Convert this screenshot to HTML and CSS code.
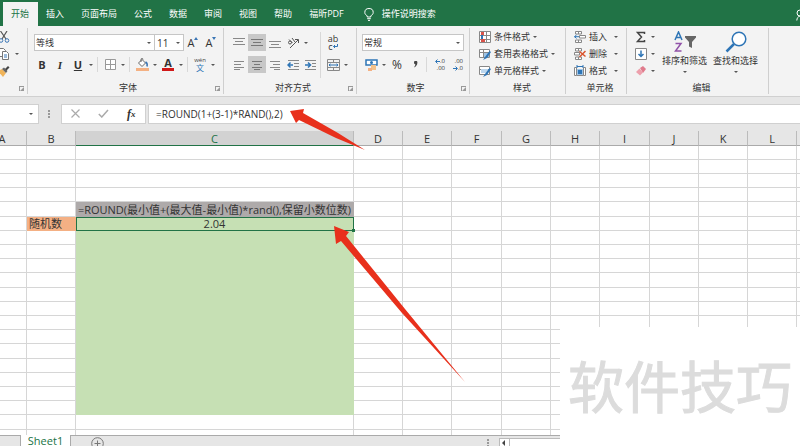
FILE: index.html
```
<!DOCTYPE html>
<html lang="zh-CN">
<head>
    <meta charset="UTF-8">
    <meta name="viewport" content="width=device-width, initial-scale=1.0">
    <title>Sheet1</title>
    <link rel="stylesheet" href="styles.css">
</head>
<body>
    <div class="menu">
        <button class="tab active">开始</button>
        <button class="tab">插入</button>
        <button class="tab">页面布局</button>
        <button class="tab">公式</button>
        <button class="tab">数据</button>
        <button class="tab">审阅</button>
        <button class="tab">视图</button>
        <button class="tab">帮助</button>
        <button class="tab">福昕PDF</button>
        <button class="tell">
            <svg width="10" height="13" viewBox="0 0 10 13" fill="none" stroke="#fff"><path d="M3.2 9V7.8C1.800 7 .8 6 .8 4.500a4.200 4 0 0 1 8.400 0C9.200 6 8.200 7 6.800 7.800V9zM3.200 10.700h3.600M4 12.400h2"/></svg>
            操作说明搜索
        </button>
        <svg class="user" width="4" height="12" viewBox="0 0 4 12" fill="none" stroke="#fff"><path d="M4 1a3 3 0 0 0 0 6M4 7C2 7.500 1 9 .8 11.500"/></svg>
    </div>

    <div class="ribbon">
        <div class="group clip">
            <div class="list">
                <button class="tool"><svg width="12" height="12" viewBox="0 0 12 12" fill="none"><path d="M2.500 0L8 8M9 0L4 8" stroke="#555" stroke-width="1.200"/><circle cx="3" cy="9.500" r="1.800" stroke="#3b76b5"/><circle cx="9" cy="9.500" r="1.800" stroke="#3b76b5"/></svg></button>
                <div class="row">
                    <button class="tool"><svg width="12" height="12" viewBox="0 0 12 12" fill="#fff" stroke="#777"><path d="M.5.5h5l2 2v6h-7z"/><path d="M4.500 3.500h4l2 2v6h-6z"/><path d="M6 7h3M6 9h3" stroke="#3b76b5"/></svg></button>
                    <button class="drop"></button>
                </div>
                <button class="tool"><svg width="12" height="12" viewBox="0 0 12 12"><path d="M0 6l4-2 4 4-3 4z" fill="#f0b45a"/><path d="M4 4l2-1.500L9.500 6 8 8z" fill="#666"/><path d="M7 4l3-3 1.500 1.500-3 3z" fill="#444"/></svg></button>
            </div>
            <div class="label"><i class="corner"></i></div>
        </div>

        <div class="group font">
            <div class="rows">
                <div class="row">
                    <span class="combo name"><select aria-label="字体"><option>等线</option></select></span>
                    <span class="combo size"><select aria-label="字号"><option>11</option></select></span>
                    <button class="tool"><span class="grow">A</span><svg class="mark" width="4" height="3" viewBox="0 0 4 3"><path d="M0 3l2-3 2 3z" fill="#3b76b5"/></svg></button>
                    <button class="tool"><span class="grow">A</span><svg class="mark" width="4" height="3" viewBox="0 0 4 3"><path d="M0 0h4L2 3z" fill="#3b76b5"/></svg></button>
                </div>
                <div class="row">
                    <button class="tool"><b>B</b></button>
                    <button class="tool"><b><em>I</em></b></button>
                    <button class="tool"><b><u>U</u></b></button>
                    <button class="drop"></button>
                    <i class="line"></i>
                    <button class="tool"><svg width="11" height="11" viewBox="0 0 11 11" fill="#fff" stroke="#999"><path d="M.5.5h10v10H.5zM5.500.5v10M.5 5.500h10"/></svg></button>
                    <button class="drop"></button>
                    <i class="line"></i>
                    <button class="tool"><svg width="13" height="13" viewBox="0 0 13 13"><path d="M2.500 5L6 1.500 9.500 5 6 8.500z" fill="#fff" stroke="#666"/><path d="M5 4V1.500a1 1 0 0 1 2 0" fill="none" stroke="#666"/><path d="M9.500 4c2 1 2 2.500 1.500 4.500" fill="none" stroke="#3b76b5" stroke-width="1.500"/><path d="M0 10h13v3H0z" fill="#f4b183"/></svg></button>
                    <button class="drop"></button>
                    <button class="tool"><span class="color">A</span></button>
                    <button class="drop"></button>
                    <i class="line"></i>
                    <button class="tool pinyin"><small>wén</small><span>文</span></button>
                    <button class="drop"></button>
                </div>
            </div>
            <div class="label">字体<i class="corner"></i></div>
        </div>

        <div class="group align">
            <div class="split">
                <div class="rows">
                    <div class="row">
                        <button class="tool"><svg width="12" height="12" viewBox="0 0 12 12" stroke="#888"><path d="M0 1.500h12M2 4.500h8M0 7.500h12"/></svg></button>
                        <button class="tool on"><svg width="12" height="12" viewBox="0 0 12 12" stroke="#777"><path d="M0 2.500h12M2 5.500h8M0 8.500h12"/></svg></button>
                        <button class="tool"><svg width="12" height="12" viewBox="0 0 12 12" stroke="#888"><path d="M0 4.500h12M2 7.500h8M0 10.500h12"/></svg></button>
                        <button class="tool"><svg width="12" height="12" viewBox="0 0 12 12" fill="none" stroke="#555"><path d="M3 11l8-8M8 2.500h3.500V6"/><circle cx="3" cy="5.500" r="1.500"/><path d="M2 2.500L5.500 6M5 1l3 4"/></svg></button>
                        <button class="drop"></button>
                    </div>
                    <div class="row">
                        <button class="tool"><svg width="10" height="10" viewBox="0 0 10 10" stroke="#888"><path d="M0 1.500h10M0 4.500h7M0 7.500h10M0 9.500h6"/></svg></button>
                        <button class="tool on"><svg width="12" height="10" viewBox="0 0 12 10" stroke="#777"><path d="M1 1.500h10M3 4.500h6M1 7.500h10M3 9.500h6"/></svg></button>
                        <button class="tool"><svg width="10" height="10" viewBox="0 0 10 10" stroke="#888"><path d="M0 1.500h10M3 4.500h7M0 7.500h10M4 9.500h6"/></svg></button>
                        <button class="tool"><svg width="12" height="12" viewBox="0 0 12 12" fill="none" stroke="#888"><path d="M1 1.500h11M7 4.500h5M7 7.500h5M1 10.500h11"/><path d="M6 6H1M3.500 3.500L1 6l2.500 2.500" stroke="#2e75b6" stroke-width="1.500"/></svg></button>
                        <button class="tool"><svg width="12" height="12" viewBox="0 0 12 12" fill="none" stroke="#888"><path d="M0 1.500h11M7 4.500h4M7 7.500h4M0 10.500h11"/><path d="M0 6h5M3 3.500L5.500 6 3 8.500" stroke="#2e75b6" stroke-width="1.500"/></svg></button>
                    </div>
                </div>
                <i class="line"></i>
                <div class="rows">
                    <div class="row">
                        <button class="tool wrap"><span>ab</span><span>c<svg width="5" height="5" viewBox="0 0 5 5" fill="none" stroke="#2e75b6"><path d="M4.500 0v2.500H.5M2 1L.5 2.500 2 4"/></svg></span></button>
                    </div>
                    <div class="row">
                        <button class="tool"><svg width="13" height="12" viewBox="0 0 13 12" fill="none" stroke="#888"><path d="M.5.5h12v11H.5zM.5 3.500h12M.5 8.500h12M6.500.5v3M6.500 8.500v3"/><path d="M2 6h9M3.500 4.800L2 6l1.500 1.200M9.500 4.800L11 6 9.500 7.200" stroke="#2e75b6"/></svg></button>
                        <button class="drop"></button>
                    </div>
                </div>
            </div>
            <div class="label">对齐方式<i class="corner"></i></div>
        </div>

        <div class="group number">
            <div class="rows">
                <div class="row">
                    <span class="combo format"><select aria-label="数字格式"><option>常规</option></select></span>
                </div>
                <div class="row">
                    <button class="tool"><svg width="13" height="13" viewBox="0 0 13 13"><path d="M1 2h11v5H1z" fill="#fff" stroke="#2e75b6" stroke-width="1.500"/><circle cx="6.500" cy="4.500" r="1.500" fill="#2e75b6"/><path d="M6 7h5v5H6z" fill="#f4c28a"/><path d="M3 10h4v3H3z" fill="#f4b183"/></svg></button>
                    <button class="drop"></button>
                    <button class="tool percent">%</button>
                    <button class="tool"><svg width="5" height="8" viewBox="0 0 5 8"><path d="M1 1.500a1.700 1.700 0 0 1 3.400 0C4.400 4 3 5.500 1 6.500 2 5.200 2.400 4.300 2.300 3.300 1.500 3.200 1 2.500 1 1.500z" fill="#444"/></svg></button>
                    <i class="line"></i>
                    <button class="tool dec"><span><svg width="5" height="5" viewBox="0 0 5 5" fill="none" stroke="#2e75b6"><path d="M5 2.500H1M2.500.5l-2 2 2 2"/></svg>.0</span><span>.00</span></button>
                    <button class="tool dec"><span>.00</span><span><svg width="5" height="5" viewBox="0 0 5 5" fill="none" stroke="#2e75b6"><path d="M0 2.500h4M2.500.5l2 2-2 2"/></svg>.0</span></button>
                </div>
            </div>
            <div class="label">数字<i class="corner"></i></div>
        </div>

        <div class="group style">
            <div class="list">
                <button class="item"><svg width="12" height="12" viewBox="0 0 12 12"><path d="M.5.5h11v11H.5zM.5 4.500h11M.5 8.500h11M7.500.5v11" fill="#fff" stroke="#888"/><path d="M2 1h3v3H2zM2 8h4v3H2z" fill="#d9534a"/><path d="M2 4h2v4H2z" fill="#2e75b6"/></svg>条件格式<i class="caret"></i></button>
                <button class="item"><svg width="12" height="12" viewBox="0 0 12 12"><path d="M.5 1.500h10v8H.5zM.5 4.500h10M4.500 1.500v8" fill="#fff" stroke="#888"/><path d="M5 5h5v4H5z" fill="#9dc3e6"/><path d="M4 12l2-3 4.500-6L12 4 8 10z" fill="#2e75b6"/></svg>套用表格格式<i class="caret"></i></button>
                <button class="item"><svg width="12" height="12" viewBox="0 0 12 12"><path d="M.5 1.500h10v8H.5zM.5 4.500h10" fill="#fff" stroke="#888"/><path d="M2 4h7v4H2z" fill="#bdd7ee"/><path d="M4 12l2-3 4.500-6L12 4 8 10z" fill="#2e75b6"/></svg>单元格样式<i class="caret"></i></button>
            </div>
            <div class="label">样式</div>
        </div>

        <div class="group cells">
            <div class="list">
                <button class="item"><svg width="12" height="12" viewBox="0 0 12 12" fill="#fff" stroke="#888"><path d="M1.500.5h6v2.500h-6zM4.500.5v2.500M1.500 9h6v2.500h-6zM4.500 9v2.500M5.500 4.500h6v2.500h-6z"/><path d="M5 5.700H.5M2.500 4l-2 1.700 2 1.700" fill="none" stroke="#2e75b6"/></svg>插入<i class="caret"></i></button>
                <button class="item"><svg width="12" height="12" viewBox="0 0 12 12" fill="#fff" stroke="#888"><path d="M1.500.5h6v2.500h-6zM4.500.5v2.500M1.500 9h6v2.500h-6zM4.500 9v2.500M.5 4.500h5v2.500h-5z"/><path d="M5.500 3.500l6 5M11.500 3l-6 6" stroke="#d9532c" stroke-width="1.500"/></svg>删除<i class="caret"></i></button>
                <button class="item"><svg width="12" height="12" viewBox="0 0 12 12" fill="#fff" stroke="#888"><path d="M.5 2.500h2v8h-2zM9.500 2.500h2v8h-2zM2.500 10.500h7"/><path d="M3 1.500h6M3 0v3M9 0v3" stroke="#2e75b6"/><path d="M3.500 4.500h5v5h-5z" fill="#2e75b6" stroke="#9dc3e6"/></svg>格式<i class="caret"></i></button>
            </div>
            <div class="label">单元格</div>
        </div>

        <div class="group edit">
            <div class="split">
                <div class="list">
                    <button class="item"><svg width="12" height="12" viewBox="0 0 12 12" fill="none" stroke="#444" stroke-width="1.500"><path d="M9.500 3V1.500h-7L6.500 6l-4 4.500h7V9"/></svg><i class="caret"></i></button>
                    <button class="item"><svg width="12" height="12" viewBox="0 0 12 12" fill="#fff" stroke="#888"><path d="M.5.5h11v11H.5z"/><path d="M6 2.500v6M3.500 6L6 8.500 8.500 6" fill="none" stroke="#2e75b6" stroke-width="1.500"/></svg><i class="caret"></i></button>
                    <button class="item"><svg width="12" height="12" viewBox="0 0 12 12"><path d="M5 3l3-2 3 3-3 4z" fill="#e07b8c"/><path d="M4.500 3.500l3.500 4L5 10.500 1 7z" fill="#eda0ac"/></svg><i class="caret"></i></button>
                </div>
                <button class="big">
                    <svg width="22" height="22" viewBox="0 0 22 22" fill="none" stroke-width="1.500"><path d="M1 9l3.500-8L8 9M2.200 6.500h4.600" stroke="#2e75b6"/><path d="M1.500 12.500h5.500l-5.500 7.500h6" stroke="#9152a8"/><path d="M11 5h11v1.500L18 11v6l-3-1.500V11l-4-4.500z" fill="#666"/></svg>
                    <span>排序和筛选</span>
                    <i class="caret"></i>
                </button>
                <button class="big">
                    <svg width="22" height="22" viewBox="0 0 22 22" fill="none" stroke="#2e75b6"><circle cx="14" cy="8" r="6.800" fill="#fff" stroke-width="1.500"/><path d="M9 13l-7.500 7.500" stroke-width="2.500"/></svg>
                    <span>查找和选择</span>
                    <i class="caret"></i>
                </button>
            </div>
            <div class="label">编辑</div>
        </div>
    </div>

    <div class="formula">
        <div class="namebox"><i class="caret"></i></div>
        <i class="dots"></i>
        <div class="fx">
            <button aria-label="取消"><svg width="9" height="9" viewBox="0 0 9 9" stroke="#aaa" stroke-width="1.200"><path d="M.5.5l8 8M8.500.5l-8 8"/></svg></button>
            <button aria-label="输入"><svg width="11" height="9" viewBox="0 0 11 9" fill="none" stroke="#aaa" stroke-width="1.500"><path d="M.8 5l3 3L10 1"/></svg></button>
            <button class="fn">f<sub>x</sub></button>
        </div>
        <input type="text" aria-label="编辑栏" value="=ROUND(1+(3-1)*RAND(),2)">
    </div>

    <div class="sheet">
        <table>
            <colgroup>
                <col class="n"><col class="n"><col class="c">
                <col class="n"><col class="n"><col class="w">
                <col class="n"><col class="n"><col class="w">
                <col class="n"><col class="n"><col class="n"><col>
            </colgroup>
            <thead>
                <tr><th>A</th><th>B</th><th class="cur">C</th><th>D</th><th>E</th><th>F</th><th>G</th><th>H</th><th>I</th><th>J</th><th>K</th><th>L</th><th></th></tr>
            </thead>
            <tbody id="cells"></tbody>
        </table>
    </div>

    <div class="bottom">
        <div class="nav"></div>
        <button class="sheet-tab">Sheet1</button>
        <div class="rest">
            <button class="add" aria-label="新工作表"><svg width="13" height="13" viewBox="0 0 13 13" fill="none" stroke="#777"><circle cx="6.500" cy="6.500" r="5.800"/><path d="M6.500 3.500v6M3.500 6.500h6"/></svg></button>
            <i class="dots"></i>
            <button class="scroll" aria-label="向左滚动"></button>
            <div class="track"></div>
        </div>
    </div>

    <svg class="arrows" width="480" height="390" viewBox="0 0 480 390" fill="#e8301c">
        <path d="M290 111l14-2-1 4 35 20 27 17-29-12-37-18-3 3z"/>
        <path d="M334 226l15 6-3 4 59 73 60 73-63-69-61-72-5 3z"/>
    </svg>
    <div class="watermark">软件技巧</div>

    <script>
        var body = document.getElementById("cells");
        var text = {
            "5-2": "=ROUND(最小值+(最大值-最小值)*rand(),保留小数位数)",
            "6-1": "随机数",
            "6-2": "2.04"
        };
        for(var r=1;r<=21;r++){
            var tr = body.insertRow();
            for(var c=0;c<13;c++){
                var td = tr.insertCell();
                td.textContent = text[r+"-"+c] || "";
                if(c==2 && r==5) td.className = "title";
                if(c==2 && r==6) td.className = "green selected";
                if(c==2 && r>6 && r<20) td.className = "green";
                if(c==1 && r==6) td.className = "orange";
            }
        }
    </script>
</body>
</html>
```
FILE: styles.css
```
*{
    margin: 0;
    padding: 0;
    box-sizing: border-box;
}
body{
    height: 100vh;
    display: flex;
    flex-direction: column;
    overflow: hidden;
    position: relative;
    background: #e6e6e6;
    color: #333;
    font: 9px/12px "Open Sans", "Noto Sans CJK SC", sans-serif;
}
button, input, select{
    border: 0;
    background: none;
    color: inherit;
    font: inherit;
}
svg{
    display: block;
    flex: none;
}
/* 菜单 */
.menu{
    display: flex;
    align-items: stretch;
    height: 26px;
    padding: 2px 0 0 3px;
    background: #217346;
    color: #fff;
}
.tab{
    padding: 0 9px 0 8px;
    white-space: nowrap;
}
.tab.active{
    background: #f3f3f3;
    color: #217346;
}
.tell{
    display: flex;
    align-items: center;
    gap: 8px;
    margin-left: 11px;
}
.user{
    margin: 7px 0 0 auto;
}
/* 功能区 */
.ribbon{
    display: flex;
    height: 71px;
    background: #f3f3f3;
    border-bottom: 1px solid #d0d0d0;
}
.group{
    display: flex;
    flex-direction: column;
    flex: none;
    margin: 2px 0;
    border-right: 1px solid #cfcfcf;
}
.label{
    position: relative;
    margin-top: auto;
    height: 12px;
    text-align: center;
}
.corner{
    position: absolute;
    right: 3px;
    bottom: 3px;
    width: 5px;
    height: 5px;
    border: 1px solid #999;
    border-width: 1px 0 0 1px;
}
.corner::after{
    content: "";
    position: absolute;
    right: 0;
    bottom: 0;
    border: 2px solid #999;
    border-top-color: transparent;
    border-left-color: transparent;
}
.clip{ width: 28px; }
.clip .list{ margin-left: -5px; }
.font{ width: 196px; padding-left: 5px; }
.align{ width: 133px; padding-left: 6px; }
.number{ width: 113px; padding-left: 5px; }
.style{ width: 96px; padding-left: 9px; }
.cells{ width: 61px; padding-left: 8px; }
.edit{ width: 142px; padding-left: 8px; }
.rows{
    display: flex;
    flex-direction: column;
    gap: 5px;
    padding-top: 6px;
}
.row{
    display: flex;
    align-items: center;
    height: 17px;
}
.split{
    display: flex;
}
.line{
    width: 1px;
    height: 15px;
    margin: 0 3px 0 2px;
    background: #d8d8d8;
}
.split .line{
    height: 46px;
    margin-top: 4px;
    margin-left: 0;
}
.tool{
    display: flex;
    align-items: center;
    justify-content: center;
    flex: none;
    width: 18px;
    height: 17px;
    font-size: 10px;
}
.tool.on{
    background: #c8c8c8;
}
.tool b{
    font-size: 11px;
}
.tool em{
    font-family: "Liberation Serif", serif;
}
.caret, .drop::after, .combo::after{
    content: "";
    display: block;
    border: 2px solid transparent;
    border-top-color: #555;
    border-bottom: 0;
}
.drop{
    display: flex;
    align-items: center;
    justify-content: center;
    flex: none;
    width: 8px;
    height: 17px;
}
.combo{
    position: relative;
    height: 17px;
    background: #fff;
    border: 1px solid #c6c6c6;
}
.combo::after{
    position: absolute;
    right: 3px;
    top: 7px;
}
.combo select{
    appearance: none;
    display: block;
    width: 100%;
    height: 15px;
    padding-left: 1px;
}
.name{ width: 121px; margin-left: 1px; }
.size{ width: 30px; margin-left: -1px; }
.size select{ font-size: 10px; padding-left: 2px; }
.format{ width: 102px; }
.grow{
    font-size: 11px;
}
.mark{
    align-self: flex-start;
    margin-top: 3px;
}
.color{
    height: 13px;
    border-bottom: 3px solid #d01818;
    padding: 0 2px;
    font-weight: bold;
    font-size: 11px;
    line-height: 10px;
}
.pinyin{
    flex-direction: column;
    font-size: 8px;
    line-height: 9px;
    color: #2e75b6;
}
.pinyin small{
    font-size: 6px;
    line-height: 6px;
    color: #444;
}
.wrap{
    flex-direction: column;
    font-size: 9px;
    line-height: 8px;
}
.wrap span, .dec span{
    display: flex;
    align-items: center;
}
.percent{
    font-size: 12px;
}
.dec{
    flex-direction: column;
    align-items: flex-end;
    padding-right: 3px;
    font-size: 6px;
    line-height: 7px;
}
.list{
    display: flex;
    flex-direction: column;
}
.item{
    display: flex;
    align-items: center;
    gap: 3px;
    height: 17px;
    white-space: nowrap;
}
.cells .caret{
    margin-left: 4px;
}
.edit .item{
    gap: 4px;
}
.edit .split .list{
    margin-right: 4px;
}
.big{
    display: flex;
    flex-direction: column;
    align-items: center;
    width: 51px;
    padding-top: 3px;
    white-space: nowrap;
}
.big span{
    margin: 2px 0 4px;
}
/* 编辑栏 */
.formula{
    display: flex;
    align-items: center;
    flex: none;
    height: 34px;
    padding-bottom: 1px;
}
.namebox{
    display: flex;
    align-items: center;
    justify-content: flex-end;
    width: 39px;
    height: 20px;
    padding-right: 5px;
    background: #fff;
    border: 1px solid #d0d0d0;
    border-left: 0;
}
.dots{
    width: 2px;
    height: 8px;
    margin: 0 11px 0 9px;
    background: repeating-linear-gradient(#999 0 2px, transparent 2px 3px);
}
.fx{
    display: flex;
    width: 85px;
    height: 20px;
    background: #fff;
    border: 1px solid #d0d0d0;
}
.fx button{
    display: flex;
    flex: 1;
    align-items: center;
    justify-content: center;
}
.fx .fn{
    font: italic bold 12px/12px "Liberation Serif", serif;
}
.fn sub{
    font-size: 9px;
}
.formula input{
    flex: 1;
    height: 20px;
    margin-left: 2px;
    padding-left: 7px;
    background: #fff;
    border: 1px solid #d0d0d0;
    border-right: 0;
    font-size: 10px;
}
/* 表格 */
.sheet{
    flex: 1;
    min-height: 0;
    overflow: hidden;
    background: #fff;
}
table{
    width: calc(100% + 22px);
    margin-left: -22px;
    table-layout: fixed;
    border-collapse: separate;
    border-spacing: 0;
    font-size: 11px;
    line-height: 13px;
}
.n{ width: 49px; }
.w{ width: 50px; }
.c{ width: 278px; }
th{
    height: 15px;
    background: #e6e6e6;
    border-right: 1px solid #bbb;
    border-bottom: 1px solid #aaa;
    font-weight: normal;
}
th.cur{
    background: #d2d2d2;
    border-bottom-color: #217346;
    color: #217346;
}
td{
    height: 14px;
    border-right: 1px solid #d6d6d6;
    border-bottom: 1px solid #d6d6d6;
    white-space: nowrap;
    text-align: center;
}
th:last-child, td:last-child{
    border-right: 0;
}
tr:nth-child(5n) td{
    height: 15px;
}
.title{
    background: #aeaaaa;
    border-color: #aeaaaa;
}
.green{
    background: #c6e0b4;
    border-color: #c6e0b4;
}
.selected{
    position: relative;
    outline: 1px solid #217346;
    outline-offset: -1px;
}
.selected::after{
    content: "";
    position: absolute;
    right: -2px;
    bottom: -2px;
    width: 3px;
    height: 3px;
    background: #217346;
}
.orange{
    background: #f4b084;
    border-color: #f4b084;
    text-align: left;
    padding-left: 2px;
}
/* 底部 */
.bottom{
    display: flex;
    flex: none;
    height: 11px;
    overflow: hidden;
}
.nav{
    width: 21px;
    border: 1px solid #aaa;
    border-width: 1px 1px 0 0;
}
.sheet-tab{
    width: 49px;
    height: 12px;
    background: #fff;
    color: #217346;
    font-size: 11px;
    line-height: 12px;
}
.rest{
    display: flex;
    flex: 1;
    align-items: flex-start;
    border: 1px solid #aaa;
    border-width: 1px 0 0 1px;
}
.add{
    margin: 1px auto 0 20px;
}
.rest .dots{
    margin: 3px 10px 0 0;
}
.scroll{
    width: 11px;
    height: 10px;
    margin-top: 2px;
    background: #fff;
    border: 1px solid #bbb;
}
.scroll::after{
    content: "";
    display: block;
    width: 0;
    margin-left: 2px;
    border: 3px solid transparent;
    border-right-color: #444;
    border-left: 0;
}
.track{
    width: 290px;
    height: 10px;
    margin-top: 2px;
    background: #fff;
    border-top: 1px solid #bbb;
}
/* 标注 */
.arrows{
    position: absolute;
    left: 0;
    top: 0;
    pointer-events: none;
}
.watermark{
    position: absolute;
    right: 0;
    bottom: 0;
    width: 240px;
    height: 119px;
    padding-left: 8px;
    background: #fff;
    color: #dcdcdc;
    -webkit-text-stroke: 1px #dcdcdc;
    font-size: 56px;
    line-height: 119px;
    white-space: nowrap;
}
```
